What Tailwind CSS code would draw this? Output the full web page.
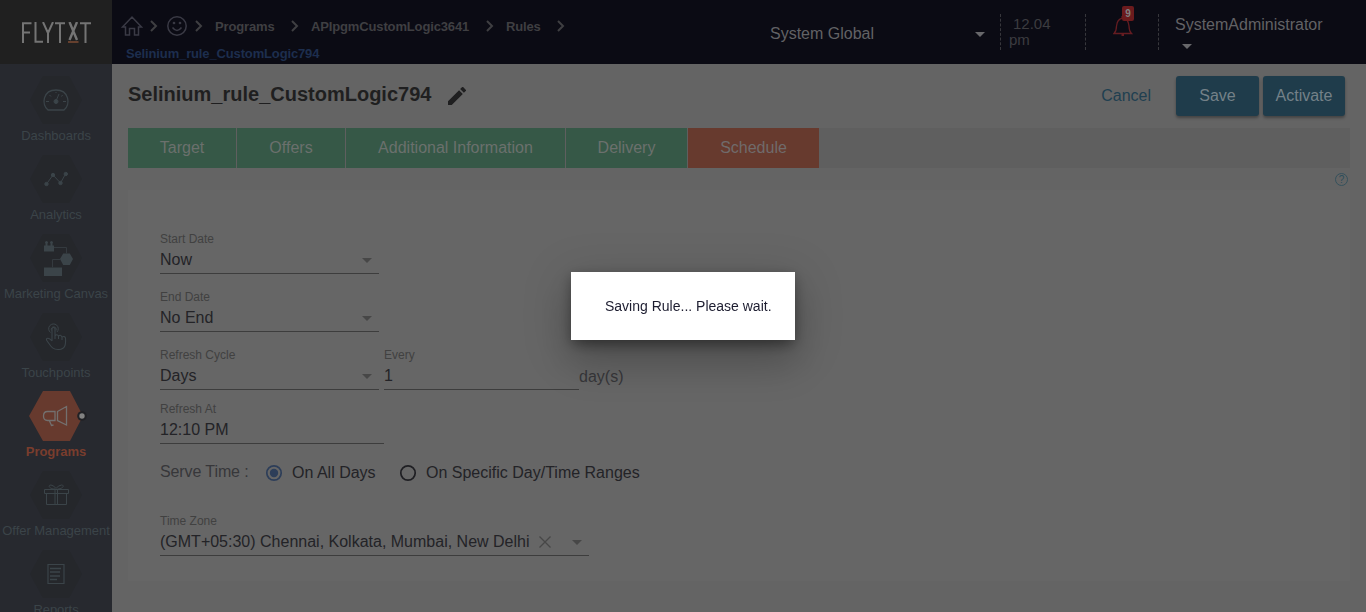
<!DOCTYPE html>
<html lang="en">
<head>
<meta charset="utf-8">
<title>Rule schedule</title>
<script src="https://cdn.jsdelivr.net/npm/@tailwindcss/browser@4"></script>
</head>
<body class="h-[612px] w-[1366px] overflow-hidden bg-[#646464] font-['Liberation_Sans',Arial,sans-serif] text-base leading-5 text-[#232327]">
<div class="flex h-full">
  <aside class="h-full w-28 shrink-0 overflow-hidden bg-[#27292f] text-[13px] leading-4 tracking-[-0.04px] text-[#3b4449]">
    <div class="flex h-16 items-start bg-[#202020] pt-[22px] pl-[21px]">
      <svg width="72" height="22" viewBox="0 0 72 22" fill="none" stroke="#747474" stroke-width="2">
        <path d="M2 21V1.200H10.500M2 10.500H9M14.500 0V19.800H22M22 0L27 11V21M32 0L27 11M34 1.200H44M39 1.200V21M59 1.200H70M64.500 1.200V21"/>
        <path d="M48.500 0L56 18M56 0L48.500 18" stroke-width="2.400"/>
        <path d="M47 20H57.500" stroke="#66402e"/>
      </svg>
    </div>
    <nav class="flex flex-col pt-[11px]">
      <a class="flex h-[79px] flex-col items-center">
        <svg width="54" height="50" viewBox="0 0 54 50" fill="none" stroke="#3b4449"><path d="M1 25L14 1H40L53 25L40 49H14Z" fill="#25272b" stroke="none"/><path d="M19 35C12 29.500 14 15 27 15S42 29.500 35 35Z" stroke-width="1.300"/><path d="M27 26L30 19M17 26.500H20M34 26.500H37M20.500 20L22 21.500M33.500 20L32.500 21.500M27 17V18"/><circle cx="27" cy="26.500" r="2" fill="#3b4449"/></svg>
        <span class="mt-[3px]">Dashboards</span>
      </a>
      <a class="flex h-[79px] flex-col items-center">
        <svg width="54" height="50" viewBox="0 0 54 50" fill="#3b4449" stroke="#3b4449"><path d="M1 25L14 1H40L53 25L40 49H14Z" fill="#25272b" stroke="none"/><path d="M17.500 30L24 21L31.500 29L36.500 20" fill="none"/><circle cx="17.500" cy="30" r="1.700"/><circle cx="24" cy="21" r="1.700"/><circle cx="31.500" cy="29" r="1.700"/><circle cx="36.800" cy="20" r="1.700"/></svg>
        <span class="mt-[3px]">Analytics</span>
      </a>
      <a class="flex h-[79px] flex-col items-center">
        <svg width="54" height="50" viewBox="0 0 54 50" fill="#3b4449"><path d="M1 25L14 1H40L53 25L40 49H14Z" fill="#25272b"/><path d="M15 12.500H16.500V10.500A1.400 1.400 0 1 1 18.500 10.500V12.500H21.500V10.500A1.400 1.400 0 1 1 23.500 10.500V12.500H25V18.500H15ZM15 34.500H33V43H15ZM31 26L34.200 20.500H40.800L44 26L40.800 32H34.200Z"/><path d="M25 14.500H37.500V20.500M31 26.500H23.500V34.500" fill="none" stroke="#343a3f"/></svg>
        <span class="mt-[3px] whitespace-nowrap">Marketing Canvas</span>
      </a>
      <a class="flex h-[79px] flex-col items-center">
        <svg width="54" height="50" viewBox="0 0 54 50" fill="none" stroke="#3b4449"><path d="M1 25L14 1H40L53 25L40 49H14Z" fill="#25272b" stroke="none"/><path d="M23 29V16.500Q24.500 14.500 26 16.500V24Q28 21.500 29.500 24Q31.500 22 33 25Q35.500 23.500 36.500 26C37 33 36 37 30 37.500C23 38 21.500 33.500 17.500 28C17 25.500 20 25.500 23 29M26 24V27M29.500 24V27M33 25V28" stroke-width="1.100"/><path d="M21.500 20.500A4.800 4.800 0 1 1 28 20M22.500 18.500A2.500 2.500 0 1 1 27 18.500"/></svg>
        <span class="mt-[3px]">Touchpoints</span>
      </a>
      <a class="flex h-[79px] flex-col items-center font-bold text-[#7a3d2d]">
        <svg class="overflow-visible" width="54" height="50" viewBox="0 0 54 50" fill="none" stroke="#73706f" stroke-width="1.300"><path d="M0 25L14 0H41L54 25L41 50H14Z" fill="#673a2e" stroke="none"/><path d="M26 20.500H18.500Q14.500 20.500 14.500 25T18.500 29.500H26ZM28.500 20.500L37.500 15.500V34L28.500 29.500ZM20.500 30L22.500 34.500L24.500 34"/><circle cx="53" cy="25" r="4.800" fill="#202125" stroke="none"/><circle cx="53" cy="25" r="2.700" fill="#828282" stroke="none"/></svg>
        <span class="mt-[3px]">Programs</span>
      </a>
      <a class="flex h-[79px] flex-col items-center">
        <svg width="54" height="50" viewBox="0 0 54 50" fill="none" stroke="#3b4449"><path d="M1 25L14 1H40L53 25L40 49H14Z" fill="#25272b" stroke="none"/><path d="M15.500 19.500H39.500V23.500H15.500ZM17.500 23.500V34.500H37.500V23.500M26 19.500V34.500M28.500 19.500V34.500M26 19C20 19 18.500 15 22 15Q25 15.500 27 18.500Q29 15.500 32.500 15C36 15 34 19 28.500 19"/></svg>
        <span class="mt-[3px] whitespace-nowrap">Offer Management</span>
      </a>
      <a class="flex h-[79px] flex-col items-center">
        <svg width="54" height="50" viewBox="0 0 54 50" fill="none" stroke="#3b4449"><path d="M1 25L14 1H40L53 25L40 49H14Z" fill="#25272b" stroke="none"/><path d="M19 15.500H35V34.500H19Z" stroke-width="1.200"/><path d="M21 19.500H32M21 23H31M21 27H31M21 30.500H28" stroke-width="1.300"/></svg>
        <span class="mt-[3px]">Reports</span>
      </a>
    </nav>
  </aside>

  <div class="flex min-w-0 flex-1 flex-col">
    <header class="flex h-16 shrink-0 bg-[#0b0b14] text-[#626265]">
      <div class="w-[658px] pt-[15px] pl-[9px] text-[13px] leading-4 font-bold tracking-[-0.14px] text-[#3f3f42]">
        <div class="flex h-[22px] items-center">
          <svg width="22" height="22" viewBox="0 0 22 22" fill="none" stroke="#3a3a45" stroke-width="1.500"><path d="M1.500 12L11 2L20.500 12H17.500V20H13.500V13.500H8.500V20H4.500V12Z"/></svg>
          <svg class="ml-[7px]" width="8" height="12" viewBox="0 0 8 12" fill="none" stroke="#3f3f42" stroke-width="2"><path d="M1 1L6 6L1 11"/></svg>
          <svg class="ml-[8px]" width="22" height="22" viewBox="0 0 22 22" fill="none" stroke="#3a3a45" stroke-width="1.500"><circle cx="11" cy="11" r="9.200"/><path d="M6.500 12.500Q11 18.500 15.500 12.500"/><circle cx="8" cy="8" r=".6"/><circle cx="14" cy="8" r=".6"/></svg>
          <svg class="ml-[7px]" width="8" height="12" viewBox="0 0 8 12" fill="none" stroke="#3f3f42" stroke-width="2"><path d="M1 1L6 6L1 11"/></svg>
          <span class="mt-[2px] ml-[12px] w-[76px]">Programs</span>
          <svg width="8" height="12" viewBox="0 0 8 12" fill="none" stroke="#3f3f42" stroke-width="2"><path d="M1 1L6 6L1 11"/></svg>
          <span class="mt-[2px] ml-[12px] w-[175px]">APIpgmCustomLogic3641</span>
          <svg width="8" height="12" viewBox="0 0 8 12" fill="none" stroke="#3f3f42" stroke-width="2"><path d="M1 1L6 6L1 11"/></svg>
          <span class="mt-[2px] ml-[12px] w-[51px]">Rules</span>
          <svg width="8" height="12" viewBox="0 0 8 12" fill="none" stroke="#3f3f42" stroke-width="2"><path d="M1 1L6 6L1 11"/></svg>
        </div>
        <div class="mt-[9px] ml-[5px] text-[#1d2e4e]">Selinium_rule_CustomLogic794</div>
      </div>
      <div class="flex w-[230px] items-start pt-6 pr-[15px]">
        <span class="flex-1">System Global</span>
        <svg class="mt-[8px]" width="10" height="5" viewBox="0 0 10 5" fill="#68686b"><path d="M0 0H10L5 5Z"/></svg>
      </div>
      <div class="mt-[14px] h-9 w-[85px] border-l border-dashed border-[#37373c] pl-2 text-[15px] leading-4 text-[#3c3c40]"><div class="pt-[2px] pl-1">12.04</div><div>pm</div></div>
      <div class="relative mt-[14px] h-9 w-[73px] border-l border-dashed border-[#37373c]">
        <svg class="mt-[2px] ml-[27px]" width="20" height="22" viewBox="0 0 20 22" fill="none" stroke="#651c21" stroke-width="1.300"><path d="M1 17.500Q3.500 15 3.500 10Q4 3 10 2Q15.500 3 16 10Q16 15 18.500 17.500ZM9 2V0H11V2"/><path d="M8.500 19H11" stroke-width="2"/></svg>
        <span class="absolute -top-2 left-[36px] flex h-[15px] w-3 items-center justify-center rounded-[2px] bg-[#6c1b1d] text-[10px] font-bold text-[#818181]">9</span>
      </div>
      <div class="mt-[14px] h-9 border-l border-dashed border-[#37373c] pl-4"><div class="pt-px">SystemAdministrator</div>
        <svg class="mt-[9px] ml-[7px]" width="10" height="5" viewBox="0 0 10 5" fill="#68686b"><path d="M0 0H10L5 5Z"/></svg>
      </div>
    </header>

    <main class="flex-1 px-4">
      <div class="flex h-16 items-start pt-3">
        <h1 class="mt-[7px] w-[304px] text-[20px] leading-[22px] font-bold whitespace-nowrap text-[#1f1f20]">Selinium_rule_CustomLogic794</h1>
        <svg class="mt-[11px] ml-[16px]" width="18" height="18" viewBox="3 3 18 18" fill="#1f1f20"><path d="M3 17.250V21h3.750L17.810 9.940l-3.750-3.750zM20.710 7.040a1 1 0 0 0 0-1.410l-2.340-2.340a1 1 0 0 0-1.410 0l-1.830 1.830 3.750 3.750z"/></svg>
        <div class="mr-[5px] ml-auto flex gap-1 text-[#748188]">
          <button class="mr-[21px] h-10 text-[#203f50]">Cancel</button>
          <button class="h-10 w-[83px] rounded-[3px] bg-[#1f3c4b] shadow-[0_2px_3px_#00000055]">Save</button>
          <button class="h-10 w-[82px] rounded-[3px] bg-[#1f3c4b] shadow-[0_2px_3px_#00000055]">Activate</button>
        </div>
      </div>
      <div class="flex h-10 bg-[#5f5f5f] text-center leading-10 text-[#6b706d]">
        <div class="w-[109px] border-r border-[#5f5f5f] bg-[#365847]">Target</div>
        <div class="w-[109px] border-r border-[#5f5f5f] bg-[#365847]">Offers</div>
        <div class="w-[220px] border-r border-[#5f5f5f] bg-[#365847]">Additional Information</div>
        <div class="w-[122px] border-r border-[#5f5f5f] bg-[#365847]">Delivery</div>
        <div class="w-[132px] border-r border-[#5f5f5f] bg-[#673a2e] text-[#706b6b]">Schedule</div>
      </div>
      <div class="flex h-[22px] justify-end pt-[5px] pr-[1px]">
        <svg width="14" height="14" viewBox="0 0 14 14" fill="none"><circle cx="6.500" cy="6.500" r="6" stroke="#35515c"/><text x="6.500" y="10" text-anchor="middle" font-family="Liberation Sans" font-size="10" fill="#2b4d5b">?</text></svg>
      </div>
      <section class="h-[391px] bg-[#666] px-8 pt-[42px]">
        <div class="h-[58px] w-[219px]">
          <div class="text-xs leading-[14px] text-[#414141]">Start Date</div>
          <div class="flex h-[28px] items-start border-b border-[#3d3d3d] pt-1"><span class="flex-1">Now</span><svg class="mt-[8px] mr-[7px]" width="10" height="5" viewBox="0 0 10 5" fill="#474747"><path d="M0 0H10L5 5Z"/></svg></div>
        </div>
        <div class="h-[58px] w-[219px]">
          <div class="text-xs leading-[14px] text-[#414141]">End Date</div>
          <div class="flex h-[28px] items-start border-b border-[#3d3d3d] pt-1"><span class="flex-1">No End</span><svg class="mt-[8px] mr-[7px]" width="10" height="5" viewBox="0 0 10 5" fill="#474747"><path d="M0 0H10L5 5Z"/></svg></div>
        </div>
        <div class="flex h-[54px]">
          <div class="w-[219px]">
            <div class="text-xs leading-[14px] text-[#414141]">Refresh Cycle</div>
            <div class="flex h-[28px] items-start border-b border-[#3d3d3d] pt-1"><span class="flex-1">Days</span><svg class="mt-[8px] mr-[7px]" width="10" height="5" viewBox="0 0 10 5" fill="#474747"><path d="M0 0H10L5 5Z"/></svg></div>
          </div>
          <div class="ml-[5px] w-[195px]">
            <div class="text-xs leading-[14px] text-[#414141]">Every</div>
            <div class="h-[28px] border-b border-[#3d3d3d] pt-1">1</div>
          </div>
          <span class="mt-[19px] text-[#37373a]">day(s)</span>
        </div>
        <div class="h-[61px] w-[224px]">
          <div class="text-xs leading-[14px] text-[#414141]">Refresh At</div>
          <div class="h-[28px] border-b border-[#3d3d3d] pt-1">12:10 PM</div>
        </div>
        <div class="flex h-[51px] items-start">
          <span class="-mt-[1px] w-[105px] tracking-[-0.1px] text-[#37373a]">Serve Time :</span>
          <svg class="mt-px" width="18" height="18" viewBox="0 0 18 18" fill="none"><circle cx="9" cy="9" r="7.200" stroke="#2d3e59" stroke-width="1.700"/><circle cx="9" cy="9" r="4.200" fill="#2d3e59"/></svg>
          <span class="ml-[9px] w-[107px]">On All Days</span>
          <svg class="mt-px" width="18" height="18" viewBox="0 0 18 18" fill="none"><circle cx="9" cy="9" r="7.200" stroke="#1f1f23" stroke-width="1.700"/></svg>
          <span class="ml-[9px]">On Specific Day/Time Ranges</span>
        </div>
        <div class="w-[429px]">
          <div class="text-xs leading-[14px] text-[#414141]">Time Zone</div>
          <div class="flex h-[28px] items-start border-b border-[#3d3d3d] pt-1 whitespace-nowrap"><span class="w-[379px]">(GMT+05:30) Chennai, Kolkata, Mumbai, New Delhi</span>
            <svg class="mt-[4px]" width="12" height="12" viewBox="0 0 12 12" stroke="#474747" stroke-width="1.300"><path d="M.5 .5L11.500 11.500M11.500 .5L.5 11.500"/></svg>
            <svg class="mt-[8px] ml-[21px]" width="10" height="5" viewBox="0 0 10 5" fill="#474747"><path d="M0 0H10L5 5Z"/></svg></div>
        </div>
      </section>
    </main>
  </div>
</div>
<div class="fixed inset-0 flex items-center justify-center">
  <div role="dialog" class="h-[68px] w-[224px] bg-white pt-6 pl-[34px] text-sm leading-5 whitespace-nowrap text-[#1d1d30] shadow-[0_11px_15px_-7px_rgba(0,0,0,0.2),0_24px_38px_3px_rgba(0,0,0,0.14),0_9px_46px_8px_rgba(0,0,0,0.12),0_4px_12px_rgba(0,0,0,0.3)]">Saving Rule... Please wait.</div>
</div>
</body>
</html>
